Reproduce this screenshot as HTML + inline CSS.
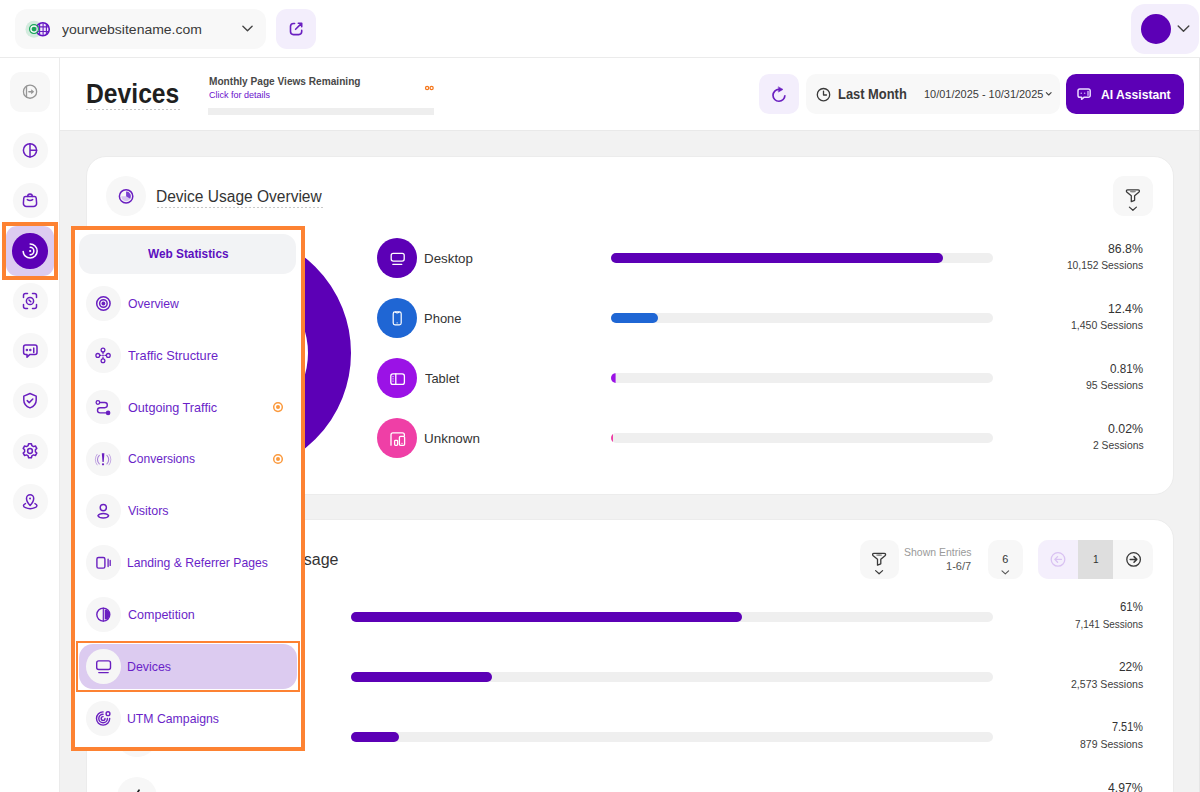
<!DOCTYPE html>
<html><head><meta charset="utf-8">
<style>
*{box-sizing:border-box;margin:0;padding:0}
html,body{width:1200px;height:792px;overflow:hidden;background:#fff;font-family:"Liberation Sans",sans-serif;color:#333}
.a{position:absolute}
svg{position:absolute;overflow:visible}
.t{position:absolute;white-space:nowrap;line-height:1}
</style></head><body>
<div class="a" style="left:0;top:0;width:1200px;height:58px;background:#fff;border-bottom:1px solid #ebebeb"></div>
<div class="a" style="left:15px;top:9px;width:251px;height:40px;background:#f8f8f8;border-radius:12px"></div>
<svg style="left:0;top:0" width="60" height="58">
  <circle cx="34" cy="29.15" r="8.5" fill="#d3ebde"/>
  <defs><clipPath id="gc"><circle cx="42.75" cy="29.25" r="6.2"/></clipPath></defs>
  <circle cx="42.75" cy="29.25" r="6.5" fill="#efe6fb" stroke="#6212c4" stroke-width="1.6"/>
  <g clip-path="url(#gc)" stroke="#6a1fc0" stroke-width="1.15" fill="none">
    <line x1="39.6" y1="21" x2="39.6" y2="37"/><line x1="43.1" y1="21" x2="43.1" y2="37"/><line x1="46.4" y1="21" x2="46.4" y2="37"/>
    <line x1="35" y1="26.8" x2="51" y2="26.8"/><line x1="35" y1="31.5" x2="51" y2="31.5"/>
  </g>
  <circle cx="34" cy="29.1" r="4.4" fill="#fff" fill-opacity="0.75" stroke="#16a457" stroke-width="1.2"/>
  <circle cx="34" cy="29.1" r="2.45" fill="#16a457"/>
</svg>
<div class="t" style="left:61.70px;top:23.00px;font-size:13.2px;font-weight:400;color:#3a3a3a;transform:scaleX(1.0606);transform-origin:0 0">yourwebsitename.com</div>
<svg style="left:0;top:0" width="300" height="58"><path d="M242.9 26.3 L247.5 30.7 L252.1 26.3" stroke="#444" stroke-width="1.4" fill="none" stroke-linecap="round" stroke-linejoin="round"/></svg>
<div class="a" style="left:276px;top:9px;width:40px;height:40px;background:#f3eefc;border-radius:11px"></div>
<svg style="left:0;top:0" width="330" height="58"><g stroke="#6a1fc0" stroke-width="1.6" fill="none" stroke-linecap="round" stroke-linejoin="round">
  <path d="M294.6 23.5 H293.5 a3 3 0 0 0 -3 3 V31.6 a3 3 0 0 0 3 3 H298.7 a3 3 0 0 0 3 -3 V30.4"/>
  <path d="M295.6 29.3 L301.5 23.4 M298.3 23.3 H301.7 V26.7"/></g></svg>
<div class="a" style="left:1131px;top:4px;width:68px;height:50px;background:#f3eefc;border-radius:14px"></div>
<div class="a" style="left:1141px;top:14px;width:30px;height:30px;background:#5c00b6;border-radius:50%"></div>
<svg style="left:0;top:0" width="1200" height="58"><path d="M1178.2 26 L1183.5 31.3 L1188.8 26" stroke="#444" stroke-width="1.4" fill="none" stroke-linecap="round" stroke-linejoin="round"/></svg>
<div class="a" style="left:0;top:58px;width:60px;height:734px;background:#fff;border-right:1px solid #ebebeb"></div>
<div class="a" style="left:10px;top:72px;width:40px;height:40px;background:#f7f7f7;border-radius:11px"></div>
<svg style="left:0;top:0" width="60" height="792"><g fill="none" stroke-linecap="round" stroke-linejoin="round">
  <g stroke="#969696" stroke-width="1.3"><circle cx="30.05" cy="91.65" r="6.6"/><line x1="26.5" y1="86.1" x2="26.5" y2="97.2"/><path d="M28.9 91.8 H31.5" stroke-width="1.6"/></g><path d="M31.2 89.3 L34.2 91.8 L31.2 94.3 z" fill="#969696"/>
</g></svg>
<div class="a" style="left:12.5px;top:133.0px;width:35px;height:35px;background:#f7f7f7;border-radius:50%"></div>
<div class="a" style="left:12.5px;top:182.5px;width:35px;height:35px;background:#f7f7f7;border-radius:50%"></div>
<div class="a" style="left:6px;top:226px;width:48px;height:50px;background:#dccbf0;border-radius:11px"></div>
<div class="a" style="left:2px;top:222px;width:56px;height:58px;border:4px solid #fd8232"></div>
<div class="a" style="left:12.3px;top:233px;width:35.5px;height:35.5px;background:#5c00b6;border-radius:50%"></div>
<div class="a" style="left:12.5px;top:283.3px;width:35px;height:35px;background:#f7f7f7;border-radius:50%"></div>
<div class="a" style="left:12.5px;top:332.8px;width:35px;height:35px;background:#f7f7f7;border-radius:50%"></div>
<div class="a" style="left:12.5px;top:383.1px;width:35px;height:35px;background:#f7f7f7;border-radius:50%"></div>
<div class="a" style="left:12.5px;top:433.5px;width:35px;height:35px;background:#f7f7f7;border-radius:50%"></div>
<div class="a" style="left:12.5px;top:483.7px;width:35px;height:35px;background:#f7f7f7;border-radius:50%"></div>
<svg style="left:0;top:0" width="60" height="792"><g fill="none" stroke="#6a1fc0" stroke-width="1.5" stroke-linecap="round" stroke-linejoin="round">
  <circle cx="30" cy="150.3" r="6.6"/><path d="M30 143.7 V156.9 M30 150.3 H36.6"/>
  <path d="M25.6 196.4 h8.8 a1.8 1.8 0 0 1 1.8 1.6 l0.4 5 a3.2 3.2 0 0 1 -3.2 3.6 h-6.8 a3.2 3.2 0 0 1 -3.2 -3.6 l0.4 -5 a1.8 1.8 0 0 1 1.8 -1.6 z"/>
  <path d="M27.7 196.4 a2.3 2.3 0 0 1 4.6 0"/><path d="M27.3 199.6 q2.7 1.9 5.4 0"/>
  <path d="M23.5 297.5 v-2 a2 2 0 0 1 2 -2 h2 M32.5 293.5 h2 a2 2 0 0 1 2 2 v2 M36.5 304.5 v2 a2 2 0 0 1 -2 2 h-2 M27.5 308.5 h-2 a2 2 0 0 1 -2 -2 v-2"/>
  <circle cx="30" cy="301" r="3.6"/><path d="M29 300 l1.8 1.8"/>
  <path d="M25.6 345 h9.4 a2 2 0 0 1 2 2 v5.6 a2 2 0 0 1 -2 2 h-5.4 l-2.6 2.6 v-2.6 h-1.4 a2 2 0 0 1 -2 -2 v-5.6 a2 2 0 0 1 2 -2 z"/>
  <path d="M33.75 348 v4.6"/><circle cx="26.9" cy="350.1" r="0.5"/><circle cx="30.3" cy="350.1" r="0.5"/>
  <path d="M30 393.5 l6.2 2.6 v4 c0 3.8 -2.6 6.6 -6.2 7.8 c-3.6 -1.2 -6.2 -4 -6.2 -7.8 v-4 z"/><path d="M27.2 400.6 l2 2 l3.6 -3.6"/>
  <circle cx="30" cy="451" r="2.4"/>
  <path d="M28.6 443.8 h2.8 l0.5 1.9 l1.6 0.9 l1.9 -0.6 l1.4 2.4 l-1.4 1.4 v1.9 l1.4 1.4 l-1.4 2.4 l-1.9 -0.6 l-1.6 0.9 l-0.5 1.9 h-2.8 l-0.5 -1.9 l-1.6 -0.9 l-1.9 0.6 l-1.4 -2.4 l1.4 -1.4 v-1.9 l-1.4 -1.4 l1.4 -2.4 l1.9 0.6 l1.6 -0.9 z"/>
  <path d="M30.1 505.5 C27.7 502.9 26.5 501 26.5 498.4 A3.6 3.6 0 0 1 33.7 498.4 C33.7 501 32.5 502.9 30.1 505.5 z"/><circle cx="30.05" cy="498.5" r="1" fill="#6a1fc0" stroke="none"/>
  <path d="M25.4 503.6 A6.7 2.9 0 1 0 35 503.6"/>
</g>
<g fill="none" stroke="#fff" stroke-width="1.5" stroke-linecap="round">
  <path d="M30.15 244 a7 7 0 0 1 0 14 a7 7 0 0 1 -7 -6.6"/>
  <path d="M30.15 247.3 a3.7 3.7 0 0 1 0 7.4"/>
  <circle cx="30.15" cy="251" r="1.1" fill="#fff" stroke="none"/>
</g></svg>
<div class="a" style="left:60px;top:58px;width:1140px;height:734px;background:#f2f2f2;border-right:1px solid #e6e6e6"></div>
<div class="a" style="left:60px;top:58px;width:1139px;height:73px;background:#fff;border-bottom:1px solid #e9e9e9"></div>
<div class="t" style="left:85.98px;top:81.00px;font-size:26.8px;font-weight:700;color:#1f1f1f;transform:scaleX(0.9210);transform-origin:0 0">Devices</div>
<div class="a" style="left:86px;top:109px;width:94px;height:1px;background:repeating-linear-gradient(90deg,#c8c8c8 0 2px,transparent 2px 4px)"></div>
<div class="t" style="left:208.75px;top:76.00px;font-size:10.9px;font-weight:700;color:#484848;transform:scaleX(0.9282);transform-origin:0 0">Monthly Page Views Remaining</div>
<div class="t" style="left:208.75px;top:91.00px;font-size:8.7px;font-weight:400;color:#6a10cc;transform:scaleX(1.0373);transform-origin:0 0">Click for details</div>
<svg style="left:0;top:0" width="1200" height="140"><circle cx="427.1" cy="88" r="1.6" fill="none" stroke="#f5771c" stroke-width="1.25"/><circle cx="431.6" cy="88" r="1.6" fill="none" stroke="#f5771c" stroke-width="1.25"/></svg>
<div class="a" style="left:208px;top:108px;width:226px;height:7px;background:#eeeeee"></div>
<div class="a" style="left:759px;top:74px;width:40px;height:40px;background:#f3eefc;border-radius:10px"></div>
<div class="a" style="left:806px;top:74px;width:254px;height:40px;background:#f8f8f8;border-radius:10px"></div>
<div class="t" style="left:838.27px;top:88.00px;font-size:13.8px;font-weight:700;color:#3a3a3a;transform:scaleX(0.9347);transform-origin:0 0">Last Month</div>
<div class="t" style="left:923.67px;top:89.00px;font-size:10.65px;font-weight:400;color:#3a3a3a;transform:scaleX(1.0296);transform-origin:0 0">10/01/2025 - 10/31/2025</div>
<div class="a" style="left:1066px;top:74px;width:118px;height:40px;background:#5c00b6;border-radius:10px"></div>
<div class="t" style="left:1101.20px;top:88.00px;font-size:13.3px;font-weight:700;color:#fff;transform:scaleX(0.9117);transform-origin:0 0">AI Assistant</div>
<svg style="left:0;top:0" width="1200" height="140"><g fill="none" stroke-linecap="round" stroke-linejoin="round">
  <path d="M784.9 95.3 A5.95 5.95 0 1 1 779 89.35" stroke="#6a1fc0" stroke-width="1.7" stroke-linecap="butt"/>
  <path d="M778.6 86.9 L783 89.4 L778.6 91.9 z" fill="#6a1fc0" stroke="#6a1fc0" stroke-width="0.5"/>
  <g stroke="#3a3a3a" stroke-width="1.3"><circle cx="823.5" cy="94.7" r="6.2"/><path d="M823.5 91.1 v3.9 h3"/></g>
  <path d="M1046.3 92.6 l2.4 2.4 l2.4 -2.4" stroke="#444" stroke-width="1.1"/>
  <g stroke="#eadcff" stroke-width="1.5"><path d="M1079.8 89 h8.6 a1.8 1.8 0 0 1 1.8 1.8 v4.6 a1.8 1.8 0 0 1 -1.8 1.8 h-4.2 l-2.6 2.1 v-2.1 h-1.8 a1.8 1.8 0 0 1 -1.8 -1.8 v-4.6 a1.8 1.8 0 0 1 1.8 -1.8 z"/></g>
  <g stroke="#c9a8f5" stroke-width="1.5"><path d="M1088 91.4 v3.8"/><path d="M1081.2 93.2 h0.1 M1084.6 93.2 h0.1"/></g>
</g></svg>
<div class="a" style="left:86px;top:156px;width:1088px;height:339px;background:#fff;border-radius:20px;border:1px solid #ececec"></div>
<div class="a" style="left:106px;top:176px;width:40px;height:40px;background:#f7f7f7;border-radius:50%"></div>
<div class="t" style="left:156.03px;top:189.00px;font-size:16px;font-weight:400;color:#333;transform:scaleX(0.9706);transform-origin:0 0">Device Usage Overview</div>
<div class="a" style="left:157px;top:206.5px;width:166px;height:1px;background:repeating-linear-gradient(90deg,#c8c8c8 0 2px,transparent 2px 4px)"></div>
<div class="a" style="left:1113px;top:176px;width:40px;height:40px;background:#f7f7f7;border-radius:11px"></div>
<svg style="left:0;top:0" width="1200" height="792"><circle cx="229" cy="353" r="100.5" fill="none" stroke="#5c00b6" stroke-width="43"/></svg>
<div class="a" style="left:377px;top:238.25px;width:40px;height:40px;background:#5c00b6;border-radius:50%"></div>
<div class="t" style="left:423.64px;top:253.00px;font-size:12.6px;font-weight:400;color:#333;transform:scaleX(1.0600);transform-origin:0 0">Desktop</div>
<div class="a" style="left:611px;top:253.25px;width:382px;height:10px;background:#efefef;border-radius:5px"></div>
<div class="a" style="left:611px;top:253.25px;width:331.6px;height:10px;background:#5c00b6;border-radius:5px"></div>
<div class="t" style="left:1107.90px;top:242.00px;font-size:13.4px;font-weight:400;color:#333;transform:scaleX(0.9184);transform-origin:0 0">86.8%</div>
<div class="t" style="left:1066.90px;top:261.00px;font-size:10.3px;font-weight:400;color:#3d3d3d">10,152 Sessions</div>
<div class="a" style="left:377px;top:298.25px;width:40px;height:40px;background:#1f66d4;border-radius:50%"></div>
<div class="t" style="left:423.67px;top:313.00px;font-size:12.6px;font-weight:400;color:#333;transform:scaleX(1.0314);transform-origin:0 0">Phone</div>
<div class="a" style="left:611px;top:313.25px;width:382px;height:10px;background:#efefef;border-radius:5px"></div>
<div class="a" style="left:611px;top:313.25px;width:47.4px;height:10px;background:#1f66d4;border-radius:5px"></div>
<div class="t" style="left:1107.98px;top:302.00px;font-size:13.4px;font-weight:400;color:#333;transform:scaleX(0.9162);transform-origin:0 0">12.4%</div>
<div class="t" style="left:1071.38px;top:321.00px;font-size:10.3px;font-weight:400;color:#3d3d3d;transform:scaleX(1.0217);transform-origin:0 0">1,450 Sessions</div>
<div class="a" style="left:377px;top:358.25px;width:40px;height:40px;background:#9b12e6;border-radius:50%"></div>
<div class="t" style="left:424.70px;top:373.00px;font-size:12.6px;font-weight:400;color:#333;transform:scaleX(1.0235);transform-origin:0 0">Tablet</div>
<div class="a" style="left:611px;top:373.25px;width:382px;height:10px;background:#efefef;border-radius:5px"></div>
<div class="a" style="left:611px;top:373.25px;width:10px;height:10px;background:#9b12e6;border-radius:5px;clip-path:inset(0 5.4px 0 0)"></div>
<div class="t" style="left:1109.70px;top:362.00px;font-size:13.4px;font-weight:400;color:#333;transform:scaleX(0.8711);transform-origin:0 0">0.81%</div>
<div class="t" style="left:1085.80px;top:381.00px;font-size:10.3px;font-weight:400;color:#3d3d3d;transform:scaleX(1.0196);transform-origin:0 0">95 Sessions</div>
<div class="a" style="left:377px;top:418.25px;width:40px;height:40px;background:#ef3fa6;border-radius:50%"></div>
<div class="t" style="left:423.63px;top:433.00px;font-size:12.6px;font-weight:400;color:#333;transform:scaleX(1.0667);transform-origin:0 0">Unknown</div>
<div class="a" style="left:611px;top:433.25px;width:382px;height:10px;background:#efefef;border-radius:5px"></div>
<div class="a" style="left:611px;top:433.25px;width:10px;height:10px;background:#ef3fa6;border-radius:5px;clip-path:inset(0 8.0px 0 0)"></div>
<div class="t" style="left:1107.70px;top:422.00px;font-size:13.4px;font-weight:400;color:#333;transform:scaleX(0.9237);transform-origin:0 0">0.02%</div>
<div class="t" style="left:1092.70px;top:441.00px;font-size:10.3px;font-weight:400;color:#3d3d3d;transform:scaleX(1.0040);transform-origin:0 0">2 Sessions</div>
<svg style="left:0;top:0" width="1200" height="792"><g fill="none" stroke="#fff" stroke-width="1.4" stroke-linecap="round" stroke-linejoin="round">
  <rect x="391.2" y="253.3" width="13" height="7.8" rx="2" stroke-width="1.3"/><path d="M392.8 264.3 h9" stroke-width="1.3"/>
  <rect x="393.2" y="311.9" width="8" height="12.9" rx="1.8" stroke-width="1.2"/><path d="M395.4 312.2 q1.8 1.6 3.6 0" stroke-width="1.1"/><path d="M397 322.9 h0.3" stroke-width="1"/>
  <rect x="390.8" y="373.8" width="13.6" height="10.6" rx="2.2" stroke-width="1.3"/><path d="M395.8 373.8 v10.6" stroke-width="1.3"/><path d="M392.9 376.7 h0.3 M392.9 378.9 h0.3 M392.9 381.1 h0.3" stroke-width="1"/>
  <path d="M391 445.2 v-10.4 a2 2 0 0 1 2 -2 h9.4 a2 2 0 0 1 2 2 v0.8" stroke-width="1.3"/><rect x="399.4" y="436.4" width="5.2" height="8.9" rx="1.1" stroke-width="1.3"/><rect x="394.6" y="440.4" width="3" height="4.9" rx="0.8" stroke-width="1.3"/><path d="M401.8 443.4 h0.4" stroke-width="1"/>
</g>
  <circle cx="126.1" cy="196.35" r="6.7" fill="none" stroke="#6a1fc0" stroke-width="1.5"/>
  <path d="M126.1 191.55 a4.8 4.8 0 1 1 -4.8 4.8 h4.8 z" fill="#d6c2f0"/>
  <path d="M126.1 196.35 L126.1 191.55 A4.8 4.8 0 0 1 130.26 198.75 Z" fill="#7b3fd3"/>
  <g fill="none" stroke="#3a3a3a" stroke-width="1.3" stroke-linecap="round" stroke-linejoin="round">
  </g>
  <g transform="translate(253.8,-363.5)"><path d="M874 553.3 H884.2 C885.8 553.3 886 554.8 885 555.8 L880.8 559.3 V563.8 L877.5 565.2 V559.3 L873.2 555.8 C872.2 554.8 872.4 553.3 874 553.3 Z" fill="none" stroke="#3a3a3a" stroke-width="1.3" stroke-linejoin="round"/>
    <ellipse cx="879.1" cy="555.1" rx="3.1" ry="0.85" fill="#8a8a8a"/>
    <path d="M875.6 570.6 l3.5 3.2 l3.5 -3.2" fill="none" stroke="#3a3a3a" stroke-width="1.2" stroke-linecap="round" stroke-linejoin="round"/></g>
</svg>
<div class="a" style="left:86px;top:519px;width:1088px;height:300px;background:#fff;border-radius:20px;border:1px solid #ececec"></div>
<div class="t" style="left:292.25px;top:552.00px;font-size:16px;font-weight:400;color:#333">Usage</div>
<div class="a" style="left:860px;top:540px;width:39px;height:39px;background:#f7f7f7;border-radius:10px"></div>
<div class="t" style="left:903.70px;top:547.00px;font-size:10.9px;font-weight:400;color:#9a9a9a;transform:scaleX(0.9614);transform-origin:0 0">Shown Entries</div>
<div class="t" style="left:945.54px;top:562.00px;font-size:10.4px;font-weight:400;color:#555;transform:scaleX(1.0609);transform-origin:0 0">1-6/7</div>
<div class="a" style="left:988px;top:540px;width:35px;height:39px;background:#f7f7f7;border-radius:10px"></div>
<div class="t" style="left:1002.20px;top:554.00px;font-size:10.9px;font-weight:400;color:#333">6</div>
<div class="a" style="left:1038px;top:540px;width:115px;height:39px;background:#f7f7f7;border-radius:10px;overflow:hidden"><div class="a" style="left:0;top:0;width:40px;height:39px;background:#f4effc"></div><div class="a" style="left:40px;top:0;width:35px;height:39px;background:#dedede"></div></div>
<div class="t" style="left:1093.00px;top:555.00px;font-size:10.2px;font-weight:400;color:#333">1</div>
<svg style="left:0;top:0" width="1200" height="792"><g fill="none" stroke-linecap="round" stroke-linejoin="round">
  <g stroke="#3a3a3a" stroke-width="1.3">

    <path d="M1002 570.8 l3.3 3 l3.3 -3" stroke-width="1.1" stroke="#555"/>
    <circle cx="1133.6" cy="559.4" r="6.8"/><path d="M1130.2 559.4 h6.5 M1134 556.6 l2.8 2.8 l-2.8 2.8" stroke-width="1.5"/>
  </g>
  <g stroke="#d9c2f2" stroke-width="1.3">
    <circle cx="1058" cy="559.4" r="6.8"/><path d="M1061.4 559.4 h-6.5 M1057.6 556.6 l-2.8 2.8 l2.8 2.8"/>
  </g>
</g><g transform="translate(0,0)"><path d="M874 553.3 H884.2 C885.8 553.3 886 554.8 885 555.8 L880.8 559.3 V563.8 L877.5 565.2 V559.3 L873.2 555.8 C872.2 554.8 872.4 553.3 874 553.3 Z" fill="none" stroke="#3a3a3a" stroke-width="1.3" stroke-linejoin="round"/>
    <ellipse cx="879.1" cy="555.1" rx="3.1" ry="0.85" fill="#8a8a8a"/>
    <path d="M875.6 570.6 l3.5 3.2 l3.5 -3.2" fill="none" stroke="#3a3a3a" stroke-width="1.2" stroke-linecap="round" stroke-linejoin="round"/></g></svg>
<div class="a" style="left:117px;top:596.5px;width:40px;height:40px;background:#f7f7f7;border-radius:50%"></div>
<div class="a" style="left:350.5px;top:611.5px;width:642.5px;height:10px;background:#efefef;border-radius:5px"></div>
<div class="a" style="left:350.5px;top:611.5px;width:391.9px;height:10px;background:#5c00b6;border-radius:5px"></div>
<div class="t" style="left:1119.90px;top:600.00px;font-size:13.4px;font-weight:400;color:#333;transform:scaleX(0.8519);transform-origin:0 0">61%</div>
<div class="t" style="left:1075.30px;top:620.00px;font-size:10.3px;font-weight:400;color:#3d3d3d;transform:scaleX(0.9657);transform-origin:0 0">7,141 Sessions</div>
<div class="a" style="left:117px;top:656.7px;width:40px;height:40px;background:#f7f7f7;border-radius:50%"></div>
<div class="a" style="left:350.5px;top:671.7px;width:642.5px;height:10px;background:#efefef;border-radius:5px"></div>
<div class="a" style="left:350.5px;top:671.7px;width:141.3px;height:10px;background:#5c00b6;border-radius:5px"></div>
<div class="t" style="left:1118.90px;top:660.00px;font-size:13.4px;font-weight:400;color:#333;transform:scaleX(0.8889);transform-origin:0 0">22%</div>
<div class="t" style="left:1071.10px;top:680.00px;font-size:10.3px;font-weight:400;color:#3d3d3d;transform:scaleX(1.0257);transform-origin:0 0">2,573 Sessions</div>
<div class="a" style="left:117px;top:716.9px;width:40px;height:40px;background:#f7f7f7;border-radius:50%"></div>
<div class="a" style="left:350.5px;top:731.9px;width:642.5px;height:10px;background:#efefef;border-radius:5px"></div>
<div class="a" style="left:350.5px;top:731.9px;width:48.3px;height:10px;background:#5c00b6;border-radius:5px"></div>
<div class="t" style="left:1112.00px;top:720.00px;font-size:13.4px;font-weight:400;color:#333;transform:scaleX(0.8132);transform-origin:0 0">7.51%</div>
<div class="t" style="left:1079.80px;top:740.00px;font-size:10.3px;font-weight:400;color:#3d3d3d;transform:scaleX(1.0177);transform-origin:0 0">879 Sessions</div>
<div class="a" style="left:117px;top:777.1px;width:40px;height:40px;background:#f7f7f7;border-radius:50%"></div>
<div class="a" style="left:350.5px;top:792.1px;width:642.5px;height:10px;background:#efefef;border-radius:5px"></div>
<div class="a" style="left:350.5px;top:792.1px;width:31.9px;height:10px;background:#5c00b6;border-radius:5px"></div>
<div class="t" style="left:1108.30px;top:781.00px;font-size:13.4px;font-weight:400;color:#333;transform:scaleX(0.9105);transform-origin:0 0">4.97%</div>
<div class="t" style="left:1079.90px;top:800.00px;font-size:10.3px;font-weight:400;color:#3d3d3d;transform:scaleX(1.0161);transform-origin:0 0">584 Sessions</div>
<svg style="left:0;top:0" width="1200" height="792"><path d="M139 790.3 l-2.4 3.6" fill="none" stroke="#222" stroke-width="1.8" stroke-linecap="round"/></svg>
<div class="a" style="left:71px;top:226px;width:234px;height:525px;background:#fff;border:4px solid #fd8232"></div>
<div class="a" style="left:79px;top:234px;width:217px;height:40px;background:#f2f3f5;border-radius:13px"></div>
<div class="t" style="left:147.50px;top:248.00px;font-size:12.3px;font-weight:700;color:#5c0fc0;transform:scaleX(0.9607);transform-origin:0 0">Web Statistics</div>
<div class="a" style="left:76px;top:641px;width:224px;height:51px;border:2px solid #fd8232"></div>
<div class="a" style="left:79px;top:644px;width:218px;height:45px;background:#dccbf0;border-radius:14px"></div>
<div class="a" style="left:86px;top:286.20px;width:34.6px;height:34.6px;background:#f6f6f6;border-radius:50%"></div>
<div class="t" style="left:128.00px;top:298.00px;font-size:12.4px;font-weight:400;color:#6a1fc8;transform:scaleX(0.9856);transform-origin:0 0">Overview</div>
<div class="a" style="left:86px;top:338.05px;width:34.6px;height:34.6px;background:#f6f6f6;border-radius:50%"></div>
<div class="t" style="left:128.00px;top:350.00px;font-size:12.4px;font-weight:400;color:#6a1fc8;transform:scaleX(1.0299);transform-origin:0 0">Traffic Structure</div>
<div class="a" style="left:86px;top:389.90px;width:34.6px;height:34.6px;background:#f6f6f6;border-radius:50%"></div>
<div class="t" style="left:128.00px;top:402.00px;font-size:12.4px;font-weight:400;color:#6a1fc8;transform:scaleX(1.0207);transform-origin:0 0">Outgoing Traffic</div>
<div class="a" style="left:86px;top:441.75px;width:34.6px;height:34.6px;background:#f6f6f6;border-radius:50%"></div>
<div class="t" style="left:128.00px;top:453.00px;font-size:12.4px;font-weight:400;color:#6a1fc8;transform:scaleX(0.9739);transform-origin:0 0">Conversions</div>
<div class="a" style="left:86px;top:493.60px;width:34.6px;height:34.6px;background:#f6f6f6;border-radius:50%"></div>
<div class="t" style="left:128.00px;top:505.00px;font-size:12.4px;font-weight:400;color:#6a1fc8;transform:scaleX(1.0050);transform-origin:0 0">Visitors</div>
<div class="a" style="left:86px;top:545.45px;width:34.6px;height:34.6px;background:#f6f6f6;border-radius:50%"></div>
<div class="t" style="left:127.02px;top:557.00px;font-size:12.4px;font-weight:400;color:#6a1fc8;transform:scaleX(0.9831);transform-origin:0 0">Landing &amp; Referrer Pages</div>
<div class="a" style="left:86px;top:597.30px;width:34.6px;height:34.6px;background:#f6f6f6;border-radius:50%"></div>
<div class="t" style="left:128.00px;top:609.00px;font-size:12.4px;font-weight:400;color:#6a1fc8;transform:scaleX(1.0106);transform-origin:0 0">Competition</div>
<div class="a" style="left:86px;top:649.15px;width:34.6px;height:34.6px;background:#f6f6f6;border-radius:50%"></div>
<div class="t" style="left:127.00px;top:661.00px;font-size:12.4px;font-weight:400;color:#6a1fc8">Devices</div>
<div class="a" style="left:86px;top:701.00px;width:34.6px;height:34.6px;background:#f6f6f6;border-radius:50%"></div>
<div class="t" style="left:127.01px;top:713.00px;font-size:12.4px;font-weight:400;color:#6a1fc8;transform:scaleX(0.9891);transform-origin:0 0">UTM Campaigns</div>
<svg style="left:0;top:0" width="320" height="792"><g fill="none" stroke="#6a1fc0" stroke-width="1.5" stroke-linecap="round" stroke-linejoin="round">
<circle cx="103.4" cy="303.5" r="6.7"/><circle cx="103.4" cy="303.5" r="3.75"/><circle cx="103.4" cy="303.5" r="1.9" fill="#6a1fc0" stroke="none"/>
<path d="M103 352.2 v1.2 M103 357.4 v1.2 M99.8 355.4 h1.2 M105 355.4 h1.2" stroke-width="1.3"/><circle cx="103" cy="350.1" r="1.9" stroke-width="1.3"/><circle cx="103" cy="360.7" r="1.9" stroke-width="1.3"/><circle cx="97.8" cy="355.4" r="1.9" stroke-width="1.3"/><circle cx="108.3" cy="355.4" r="1.9" stroke-width="1.3"/><circle cx="103" cy="355.4" r="0.9" fill="#6a1fc0" stroke="none"/>
<circle cx="97.9" cy="402.5" r="1.8" stroke-width="1.3"/><path d="M99.7 402.5 h5 a2.6 2.6 0 0 1 0 5.2 h-4.6 a2.6 2.6 0 0 0 0 5.2 h6" stroke-width="1.4"/><circle cx="108.1" cy="412.9" r="2.3" fill="#6a1fc0" stroke="none"/>
<path d="M101.8 453.3 h2.6 l-0.7 8.6 h-1.2 z" fill="#6a1fc0" stroke="none"/><circle cx="103" cy="464.3" r="1.1" fill="#6a1fc0" stroke="none"/><path d="M99.3 455.3 a6 6 0 0 0 0 8.6 M106.9 455.3 a6 6 0 0 1 0 8.6" stroke-width="1.1" opacity="0.55"/><path d="M97.1 454.3 a8.5 8.5 0 0 0 0 10.6 M109.1 454.3 a8.5 8.5 0 0 1 0 10.6" stroke-width="1" opacity="0.35"/>
<circle cx="103.3" cy="507.6" r="3.1" stroke-width="1.4"/><path d="M97.9 515.75 C99.5 512.7 107.1 512.7 108.7 515.75 C107.1 518.8 99.5 518.8 97.9 515.75 z" stroke-width="1.4"/>
<rect x="96.9" y="557.5" width="8" height="10.6" rx="1.6" stroke-width="1.4"/><path d="M108.1 559.2 v7.4 M110.2 560.4 v5" stroke-width="1.3"/>
<circle cx="103.3" cy="614.6" r="6.5" stroke-width="1.4"/><path d="M103.3 608.1 v13" stroke-width="1.2"/><path d="M104.7 609.6 a5 5 0 0 1 0 10 z" fill="#6a1fc0" stroke="none"/>
<rect x="96.7" y="660.9" width="13.8" height="8.6" rx="2" stroke-width="1.4"/><path d="M98.8 672.6 h9.4" stroke-width="1.4"/>
<path d="M103.1 711.9 A6.6 6.6 0 1 0 109.7 718.5" stroke-width="1.4"/><path d="M103.1 714.2 A4.3 4.3 0 1 0 107.4 718.5" stroke-width="1.4"/><path d="M103.1 716.6 A1.9 1.9 0 1 0 105 718.5" stroke-width="1.4"/><circle cx="108" cy="713.7" r="1.9" stroke-width="1.4"/>
</g>
<g><circle cx="278" cy="407.1" r="4.3" fill="none" stroke="#fb9a3e" stroke-width="1.5"/><circle cx="278" cy="407.1" r="2" fill="#fb9a3e"/><circle cx="278" cy="459" r="4.3" fill="none" stroke="#fb9a3e" stroke-width="1.5"/><circle cx="278" cy="459" r="2" fill="#fb9a3e"/></g></svg>
</body></html>
